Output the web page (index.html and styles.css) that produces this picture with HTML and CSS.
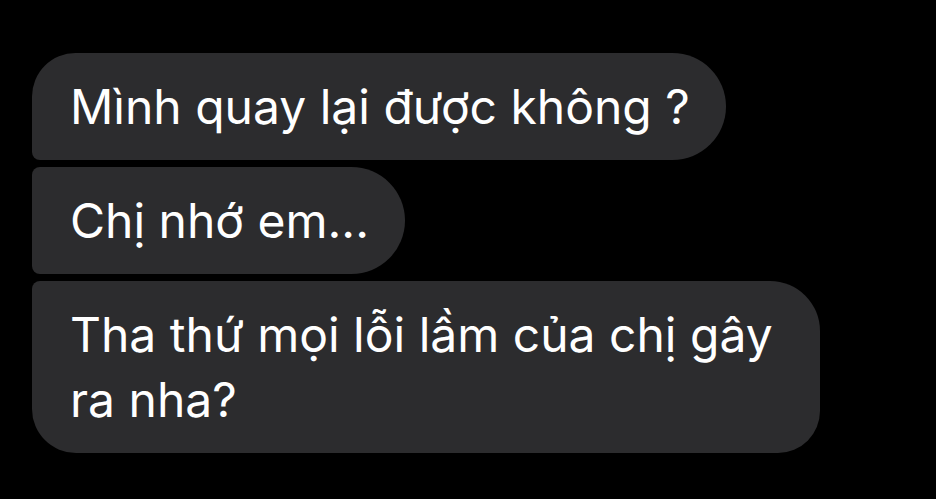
FILE: index.html
```html
<!DOCTYPE html>
<html lang="vi">
<head>
    <meta charset="UTF-8">
    <title>Tin nhắn</title>
    <link rel="stylesheet" href="styles.css">
</head>
<body>

<div class="thread">
    <div class="bubble first">Mình quay lại được không ?</div>
    <div class="bubble middle">Chị nhớ em...</div>
    <div class="bubble last">Tha thứ mọi lỗi lầm của chị gây ra nha?</div>
</div>

</body>
</html>
```

FILE: styles.css
```css
body {
    margin: 0;
    background: #000;
    font-family: Inter, "Noto Sans", sans-serif;
    color: #fff;
}
.thread {
    display: flex;
    flex-direction: column;
    align-items: flex-start;
    gap: 7px;
    padding: 53px 0 0 32px;
}
.bubble {
    background: #2c2c2e;
    font-size: 48px;
    line-height: 65px;
    padding: 21px 36px 21px 38px;
    max-width: 714px;
}
.first {
    border-radius: 44px 54px 54px 8px;
}
.middle {
    border-radius: 8px 54px 54px 8px;
}
.last {
    border-radius: 8px 50px 42px 44px;
}
```
